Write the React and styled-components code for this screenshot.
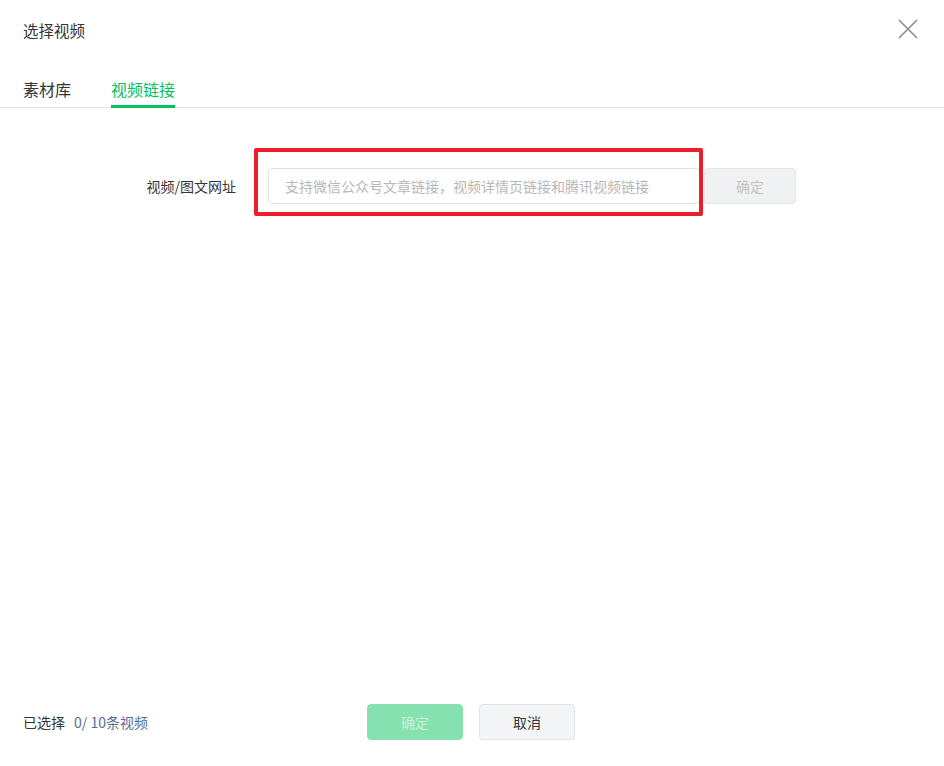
import styled, { createGlobalStyle } from 'styled-components'

const GlobalStyle = createGlobalStyle`
  html, body {
    margin: 0;
    padding: 0;
    background: #fff;
  }
  body {
    font-family: "Noto Sans CJK SC", "Noto Sans", sans-serif;
    color: #353535;
  }
  * {
    box-sizing: border-box;
  }
`;

const Dialog = styled.div`
  width: 944px;
  height: 766px;
  display: flex;
  flex-direction: column;
  background: #fff;
`;

const Header = styled.div`
  height: 62px;
  display: flex;
  align-items: center;
  justify-content: space-between;
  padding: 0 25px 2px 23px;
`;

const Title = styled.h3`
  margin: 0;
  font-size: 15.5px;
  font-weight: 400;
  line-height: 24px;
  color: #353535;
`;

const CloseButton = styled.button`
  width: 22px;
  height: 22px;
  padding: 0;
  border: 0;
  background: none;
  display: flex;
  align-items: center;
  justify-content: center;
  margin-top: -2px;
  cursor: pointer;
`;

const Tabs = styled.div`
  display: flex;
  gap: 40px;
  padding: 0 23px;
  border-bottom: 1px solid #e4e4e4;
`;

const Tab = styled.div`
  padding: 15px 0 4px;
  line-height: 24px;
  font-size: 16px;
  margin-bottom: -1px;
  color: ${p => (p.$active ? '#07c160' : '#353535')};
  border-bottom: 3px solid ${p => (p.$active ? '#07c160' : 'transparent')};
  cursor: pointer;
`;

const Body = styled.div`
  flex: 1;
  padding-top: 60px;
`;

const FormRow = styled.div`
  display: flex;
  align-items: center;
`;

const Label = styled.label`
  width: 236px;
  text-align: right;
  margin-right: 32px;
  font-size: 14px;
  color: #353535;
`;

const InputWrap = styled.div`
  position: relative;
  width: 432px;
  height: 36px;
  margin-right: 4px;
`;

const Input = styled.input`
  width: 100%;
  height: 100%;
  border: 1px solid #e2e2e2;
  border-radius: 4px;
  padding: 0 16px;
  font-family: inherit;
  font-size: 14px;
  color: #353535;
  outline: none;

  &::placeholder {
    color: #b8b8b8;
  }
`;

const Highlight = styled.span`
  position: absolute;
  left: -14px;
  top: -20px;
  right: -3px;
  bottom: -12px;
  border: 4px solid #eb1e2b;
  border-radius: 2px;
  pointer-events: none;
`;

const SmallButton = styled.button`
  width: 92px;
  height: 36px;
  border: 1px solid #e4e5e7;
  border-radius: 4px;
  background: #f0f1f3;
  color: #c3c3c3;
  font-family: inherit;
  font-size: 14px;
`;

const Footer = styled.div`
  display: grid;
  grid-template-columns: 1fr auto 1fr;
  align-items: center;
  padding: 0 23px 26px;
`;

const Count = styled.div`
  font-size: 14px;
  color: #353535;

  span {
    color: #576b95;
    margin-left: 9px;
  }
`;

const Actions = styled.div`
  display: flex;
  gap: 16px;
  margin-left: -2px;
`;

const Button = styled.button`
  width: 96px;
  height: 36px;
  border-radius: 4px;
  font-family: inherit;
  font-size: 14px;
  border: 1px solid ${p => (p.$primary ? '#86e1b0' : '#e3e3e5')};
  background: ${p => (p.$primary ? '#86e1b0' : '#f4f5f7')};
  color: ${p => (p.$primary ? '#c8f1da' : '#353535')};
  cursor: pointer;
`;

const CloseIcon = () => (
  <svg width="20" height="20" viewBox="0 0 20 20">
    <path d="M1 1 L19 19 M19 1 L1 19" stroke="#8c8c8c" strokeWidth="1.6" fill="none" />
  </svg>
);

const App = () => {
  return (
    <Dialog>
      <GlobalStyle />
      <Header>
        <Title>选择视频</Title>
        <CloseButton aria-label="关闭">
          <CloseIcon />
        </CloseButton>
      </Header>
      <Tabs>
        <Tab>素材库</Tab>
        <Tab $active>视频链接</Tab>
      </Tabs>
      <Body>
        <FormRow>
          <Label>视频/图文网址</Label>
          <InputWrap>
            <Input placeholder="支持微信公众号文章链接，视频详情页链接和腾讯视频链接" />
            <Highlight />
          </InputWrap>
          <SmallButton disabled>确定</SmallButton>
        </FormRow>
      </Body>
      <Footer>
        <Count>
          已选择<span>0/ 10条视频</span>
        </Count>
        <Actions>
          <Button $primary disabled>确定</Button>
          <Button>取消</Button>
        </Actions>
        <div />
      </Footer>
    </Dialog>
  );
};

export default App;
